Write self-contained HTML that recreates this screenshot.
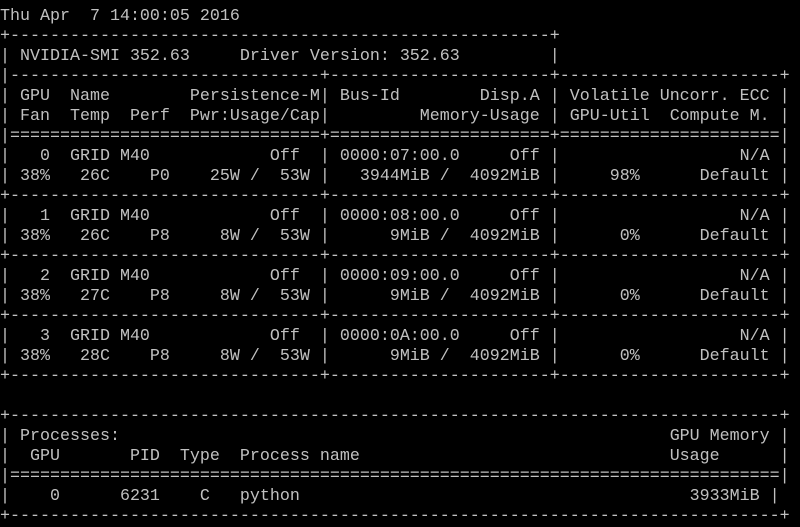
<!DOCTYPE html>
<html><head><style>
html,body{margin:0;padding:0;background:#000;width:800px;height:521px;overflow:hidden}
pre{margin:0;position:absolute;left:0;top:7px;font-family:"Liberation Mono",monospace;font-size:16.67px;line-height:20px;color:#c0c0c0;letter-spacing:0}
</style></head><body><pre>Thu Apr  7 14:00:05 2016
+------------------------------------------------------+
| NVIDIA-SMI 352.63     Driver Version: 352.63         |
|-------------------------------+----------------------+----------------------+
| GPU  Name        Persistence-M| Bus-Id        Disp.A | Volatile Uncorr. ECC |
| Fan  Temp  Perf  Pwr:Usage/Cap|         Memory-Usage | GPU-Util  Compute M. |
|===============================+======================+======================|
|   0  GRID M40            Off  | 0000:07:00.0     Off |                  N/A |
| 38%   26C    P0    25W /  53W |   3944MiB /  4092MiB |     98%      Default |
+-------------------------------+----------------------+----------------------+
|   1  GRID M40            Off  | 0000:08:00.0     Off |                  N/A |
| 38%   26C    P8     8W /  53W |      9MiB /  4092MiB |      0%      Default |
+-------------------------------+----------------------+----------------------+
|   2  GRID M40            Off  | 0000:09:00.0     Off |                  N/A |
| 38%   27C    P8     8W /  53W |      9MiB /  4092MiB |      0%      Default |
+-------------------------------+----------------------+----------------------+
|   3  GRID M40            Off  | 0000:0A:00.0     Off |                  N/A |
| 38%   28C    P8     8W /  53W |      9MiB /  4092MiB |      0%      Default |
+-------------------------------+----------------------+----------------------+

+-----------------------------------------------------------------------------+
| Processes:                                                       GPU Memory |
|  GPU       PID  Type  Process name                               Usage      |
|=============================================================================|
|    0      6231    C   python                                       3933MiB |
+-----------------------------------------------------------------------------+</pre></body></html>
